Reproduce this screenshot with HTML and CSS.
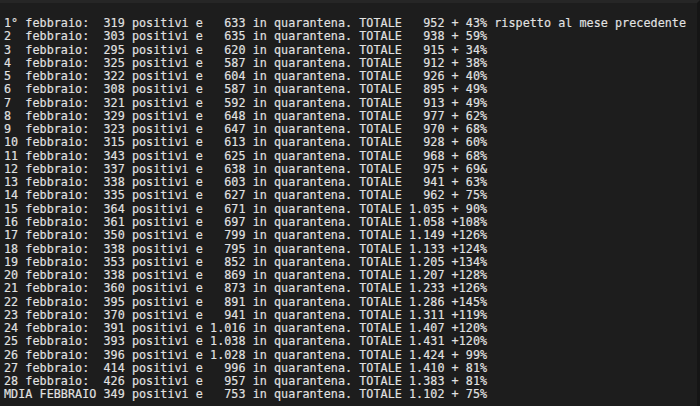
FILE: index.html
```html
<!DOCTYPE html>
<html lang="it">
<head>
<meta charset="utf-8">
<title>Febbraio</title>
<link rel="stylesheet" href="styles.css">
</head>
<body>
<div class="term">
<pre class="out">1° febbraio:  319 positivi e   633 in quarantena. TOTALE   952 + 43% rispetto al mese precedente
2  febbraio:  303 positivi e   635 in quarantena. TOTALE   938 + 59%
3  febbraio:  295 positivi e   620 in quarantena. TOTALE   915 + 34%
4  febbraio:  325 positivi e   587 in quarantena. TOTALE   912 + 38%
5  febbraio:  322 positivi e   604 in quarantena. TOTALE   926 + 40%
6  febbraio:  308 positivi e   587 in quarantena. TOTALE   895 + 49%
7  febbraio:  321 positivi e   592 in quarantena. TOTALE   913 + 49%
8  febbraio:  329 positivi e   648 in quarantena. TOTALE   977 + 62%
9  febbraio:  323 positivi e   647 in quarantena. TOTALE   970 + 68%
10 febbraio:  315 positivi e   613 in quarantena. TOTALE   928 + 60%
11 febbraio:  343 positivi e   625 in quarantena. TOTALE   968 + 68%
12 febbraio:  337 positivi e   638 in quarantena. TOTALE   975 + 69&amp;
13 febbraio:  338 positivi e   603 in quarantena. TOTALE   941 + 63%
14 febbraio:  335 positivi e   627 in quarantena. TOTALE   962 + 75%
15 febbraio:  364 positivi e   671 in quarantena. TOTALE 1.035 + 90%
16 febbraio:  361 positivi e   697 in quarantena. TOTALE 1.058 +108%
17 febbraio:  350 positivi e   799 in quarantena. TOTALE 1.149 +126%
18 febbraio:  338 positivi e   795 in quarantena. TOTALE 1.133 +124%
19 febbraio:  353 positivi e   852 in quarantena. TOTALE 1.205 +134%
20 febbraio:  338 positivi e   869 in quarantena. TOTALE 1.207 +128%
21 febbraio:  360 positivi e   873 in quarantena. TOTALE 1.233 +126%
22 febbraio:  395 positivi e   891 in quarantena. TOTALE 1.286 +145%
23 febbraio:  370 positivi e   941 in quarantena. TOTALE 1.311 +119%
24 febbraio:  391 positivi e 1.016 in quarantena. TOTALE 1.407 +120%
25 febbraio:  393 positivi e 1.038 in quarantena. TOTALE 1.431 +120%
26 febbraio:  396 positivi e 1.028 in quarantena. TOTALE 1.424 + 99%
27 febbraio:  414 positivi e   996 in quarantena. TOTALE 1.410 + 81%
28 febbraio:  426 positivi e   957 in quarantena. TOTALE 1.383 + 81%
MDIA FEBBRAIO 349 positivi e   753 in quarantena. TOTALE 1.102 + 75%</pre>
</div>
</body>
</html>
```

FILE: styles.css
```css
html, body {
  margin: 0;
  padding: 0;
  background: #1d1d1d;
}
.term {
  width: 700px;
  height: 406px;
  box-sizing: border-box;
  background: #1d1d1d;
  border-top: 3px solid #262626;
  border-right: 3px solid #151515;
  padding: 14px 0 0 4px;
  overflow: hidden;
}
.out {
  margin: 0;
  font-family: "DejaVu Sans Mono", "Liberation Mono", monospace;
  font-size: 11.74px;
  line-height: 13.27px;
  letter-spacing: 0.04px;
  color: #e2e2e2;
  -webkit-text-stroke: 0.15px #e2e2e2;
  white-space: pre;
}
```
